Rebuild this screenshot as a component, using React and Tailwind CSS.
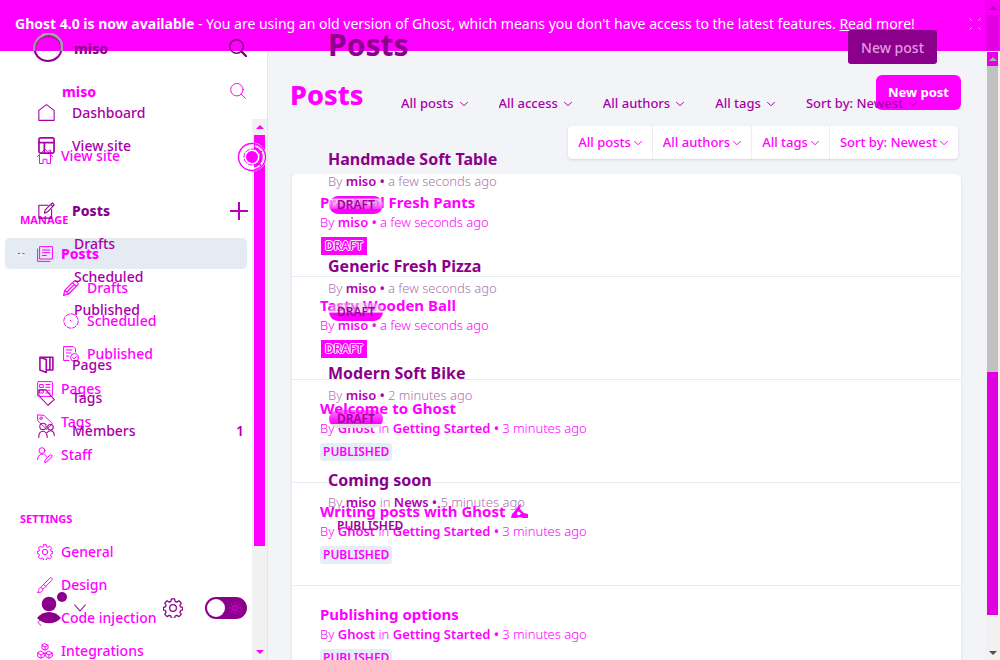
import React from "react";

const stroke = {
  fill: "none",
  stroke: "currentColor",
  strokeLinecap: "round",
  strokeLinejoin: "round",
};

function Icon({ name, className = "size-4" }) {
  return (
    <svg viewBox="0 0 16 16" className={`shrink-0 ${className}`} aria-hidden="true" {...stroke}>
      {icons[name]}
    </svg>
  );
}

const gearPath =
  "M6.7.7h2.6l.4 2 1.3.6 1.8-1.1 1.8 1.9-1.1 1.7.6 1.3 1.6.4v2l-1.6.5-.6 1.4 1.1 1.7-1.8 1.8-1.8-1-1.3.5-.4 1.9H6.7l-.4-1.9-1.3-.5-1.8 1-1.8-1.8 1.1-1.7-.6-1.4-1.6-.5v-2l1.6-.4.6-1.3-1.1-1.7 1.8-1.9L5 3.3l1.3-.6z";

const icons = {
  search: (
    <>
      <circle cx="6.9" cy="6.7" r="6.2" />
      <path d="M11.3 11.2l4.2 4.2" />
    </>
  ),
  searchBold: (
    <>
      <circle cx="6.7" cy="6.7" r="6" strokeWidth="1.2" />
      <path d="M11 11l4.3 4.3" strokeWidth="1.9" />
    </>
  ),
  houseA: <path d="M.5 8.5L8 1.2l7.5 7.3M2.5 7.5v8h3.6v-4.300h3.8v4.300h3.600v-8M12 4.500V2.200h1.500v3.500" />,
  house: <path d="M.8 6L8 .6 15.2 6v9.4H.8z" />,
  layout: (
    <g strokeWidth="1.6">
      <rect x=".9" y=".9" width="14.2" height="14.2" rx="1.5" />
      <path d="M.8 5.300h14.400M6 5.300v9.900" />
    </g>
  ),
  compose: <path d="M9.5 3H.8v12.200h12V7M6 10.5l.8-3L13.5.8l1.8 1.800L8.800 9.500zM12 2.300l1.800 1.800" />,
  stack: (
    <>
      <rect x="3" y=".6" width="12.4" height="12.4" />
      <path d="M.6 3v12.4H13M5.5 4h7.200M5.500 6.700h7.200M5.500 9.500h3.800" />
    </>
  ),
  pencil: <path d="M.6 15.4l1.2-5L11 1.2c1.6-1.5 5.200 2 3.700 3.700L5.600 14zM1.800 10.400L5.600 14M9.500 2.700l3.700 3.700M4 11.800l7.500-7.400" strokeWidth="1.2" />,
  clock: (
    <>
      <circle cx="8" cy="8" r="7.2" strokeDasharray="4 1.6" />
      <path d="M7.3 7.3l.9.9" />
    </>
  ),
  published: (
    <>
      <path d="M6 14.500H.6V.6h9.700l2.200 2.200V6M3.300 4h5.400M3.300 7h4.500M3.300 10h2.500" />
      <circle cx="11.5" cy="11.5" r="3.9" />
      <path d="M9.700 11.600l1.400 1.300 2.200-2.600" />
    </>
  ),
  pages: (
    <>
      <rect x=".6" y=".6" width="14.8" height="14.8" rx="1.2" />
      <path d="M3 3.500h3.300v3H3zM3 9h3.300v3H3zM8.800 3.500H13M8.800 6.300H13M8.800 9.300H13M8.800 12H13" />
    </>
  ),
  book: (
    <path d="M1.800 1.200h9.400v12H8M1.800 1.200l6 2v12.300l-6-2.300zM11.200 1.200H14v12h-2.800" strokeWidth="1.5" />
  ),
  tagA: (
    <>
      <path d="M.7.9L7 1.300l8.400 8.400-5.700 5.700L1.200 7.200z" />
      <circle cx="4" cy="4.2" r="1.2" />
    </>
  ),
  tag: <path d="M.8.8h6.500l8 9.200-6 5.300-8.500-9z" />,
  members: (
    <>
      <circle cx="4.7" cy="4.2" r="3" />
      <circle cx="11.7" cy="5" r="2.6" />
      <path d="M.7 14.500c0-7.800 8-7.800 8 0M8.500 10c2.300-3 6.800-2.400 6.800 3" />
    </>
  ),
  staff: (
    <>
      <circle cx="5" cy="3.6" r="2.9" />
      <path d="M.6 12.500c0-7 8-6.600 8.800-2.800M7.700 15.300l.5-2.400 4.900-5c1-1 2.800.8 1.800 1.800l-4.900 5z" />
    </>
  ),
  gear: (
    <>
      <path d={gearPath} />
      <circle cx="8" cy="8" r="2.7" />
    </>
  ),
  brush: <path d="M.7 15.400c1.400-1 .4-2.800 1.600-4 2-1.900 4.900.8 3 2.800-1.300 1.300-3 1.200-4.600 1.200zM4 10.200L12.600 1.400c1.600-1.600 3.600.4 2.100 2L6 12.300M6.800 7.500l2 2" />,
  code: <path d="M4 9.500L.8 12.500l3.200 3" />,
  modules: (
    <>
      <path d="M8 .7l3 1.600v3.300l-3 1.700-3-1.700V2.300zM4 8.300l3.300 1.800v3.300L4 15.300.7 13.400v-3.300zM12 8.300l3.300 1.800v3.300L12 15.300l-3.300-1.900v-3.300z" />
      <path d="M5 2.300L8 4l3-1.700M8 4v3M.7 10.100L4 12l3.300-1.900M4 12v3M8.700 10.100L12 12l3.300-1.900M12 12v3" />
    </>
  ),
  plus: <path d="M8 0v16M0 8h16" strokeWidth="1.8" strokeLinecap="butt" />,
  chevron: <path d="M1 4.500l7 7 7-7" strokeWidth="2" />,
  chevronThin: <path d="M1 4l7 8 7-8" strokeWidth="1.5" />,
  close: <path d="M1 1l14 14M15 1L1 15" strokeDasharray="3 14 3" />,
};

function Chevron({ className = "size-2" }) {
  return <Icon name="chevron" className={className} />;
}

function Filter({ label, first, boxed }) {
  return (
    <label
      className={
        boxed
          ? `flex items-center gap-[3px] px-2.5 ${first ? "" : "border-l border-[#eeeef2]"}`
          : "flex items-center gap-1.5"
      }
    >
      <select aria-label={label} className="field-sizing-content appearance-none bg-transparent font-medium">
        <option>{label}</option>
      </select>
      <Chevron />
    </label>
  );
}

function NavLink({ icon, label, sub, active }) {
  return (
    <a
      href="#"
      className={`flex items-center gap-2 rounded-[5px] ${sub ? "pl-[58px]" : "pl-2"} ${
        active ? "my-0.5 h-[31px] bg-[#e5ebf2] font-extrabold" : "h-[33px] font-medium"
      }`}
    >
      {!sub && (
        <span className="flex w-4 justify-center">
          {active && (
            <svg viewBox="0 0 8 6" className="h-1.5 w-2" fill="none" aria-hidden="true">
              <path d="M1 2.500h2M5.500 2.500h2" stroke="#ff00ff" />
              <path d="M2.500 3.500L4 5l1.500-1.500" stroke="#fff" />
            </svg>
          )}
        </span>
      )}
      <Icon name={icon} />
      {label}
    </a>
  );
}

function NavHeading({ children }) {
  return <h2 className="pt-10 pb-2 pl-[15px] text-[11px] leading-4 font-bold">{children}</h2>;
}

function Arrow({ down, className = "" }) {
  return (
    <svg viewBox="0 0 8 4" className={`h-1 w-2 ${className}`} fill="currentColor" aria-hidden="true">
      <path d={down ? "M0 0h8L4 4z" : "M0 4h8L4 0z"} />
    </svg>
  );
}

const entries = [
  { title: "Practical Fresh Pants", by: "miso", when: "a few seconds ago", state: "DRAFT" },
  { title: "Tasty Wooden Ball", by: "miso", when: "a few seconds ago", state: "DRAFT" },
  { title: "Welcome to Ghost", by: "Ghost", tag: "Getting Started", when: "3 minutes ago", state: "PUBLISHED" },
  { title: "Writing posts with Ghost", hand: true, by: "Ghost", tag: "Getting Started", when: "3 minutes ago", state: "PUBLISHED" },
  { title: "Publishing options", by: "Ghost", tag: "Getting Started", when: "3 minutes ago", state: "PUBLISHED" },
];

const recent = [
  { title: "Handmade Soft Table", by: "miso", when: "a few seconds ago", state: "DRAFT", fill: "bg-linear-to-b from-[#ff00ff] from-12% via-[#d8d0d8]/60 via-20% to-[#ff00ff] to-75%" },
  { title: "Generic Fresh Pizza", by: "miso", when: "a few seconds ago", state: "DRAFT", fill: "bg-linear-to-b from-[#dcd4dc]/50 from-50% to-[#ff00ff] to-55%" },
  { title: "Modern Soft Bike", by: "miso", when: "2 minutes ago", state: "DRAFT", fill: "bg-linear-to-b from-[#ff00ff]/60 from-10% via-[#ff00ff] via-75% to-[#e4e0e4] to-80%" },
  { title: "Coming soon", by: "miso", tag: "News", when: "5 minutes ago", state: "PUBLISHED", fill: "" },
];

function Meta({ post, strong }) {
  return (
    <p className="text-[13px] leading-5 font-light whitespace-nowrap">
      By <b className={strong}>{post.by}</b>
      {post.tag && (
        <>
          {" "}in <b className={strong}>{post.tag}</b>
        </>
      )}{" "}
      <b className={strong}>•</b> {post.when}
    </p>
  );
}

function BaseSidebar() {
  return (
    <aside className="flex w-[268px] shrink-0 flex-col border-r border-[#e3e6ec] bg-white text-[14px]">
      <div className="flex h-[68px] shrink-0 items-center justify-between pt-3 pr-[21px] pl-[62px]">
        <strong className="font-extrabold">miso</strong>
        <button aria-label="Search">
          <Icon name="search" />
        </button>
      </div>
      <div className="flex min-h-0 flex-1">
        <nav className="min-w-0 flex-1 overflow-hidden px-[5px] pt-5">
          <NavLink icon="houseA" label="View site" />
          <NavHeading>MANAGE</NavHeading>
          <NavLink icon="stack" label="Posts" active />
          <NavLink icon="pencil" label="Drafts" sub />
          <NavLink icon="clock" label="Scheduled" sub />
          <NavLink icon="published" label="Published" sub />
          <div className="pt-0.5">
            <NavLink icon="pages" label="Pages" />
            <NavLink icon="tagA" label="Tags" />
            <NavLink icon="staff" label="Staff" />
          </div>
          <NavHeading>SETTINGS</NavHeading>
          <NavLink icon="gear" label="General" />
          <NavLink icon="brush" label="Design" />
          <NavLink icon="code" label="Code injection" />
          <NavLink icon="modules" label="Integrations" />
        </nav>
        <div className="relative flex w-[15px] shrink-0 flex-col items-center bg-[#f1f1f1]">
          <Arrow className="my-[6px] shrink-0" />
          <div className="w-[11px] flex-[413] bg-[#ff00ff]" />
          <div className="flex-[98]" />
          <Arrow down className="my-[6px] shrink-0" />
          <svg viewBox="0 0 30 30" className="absolute top-[23px] -left-[15px] size-[30px] max-w-none" fill="none" aria-hidden="true">
            <circle cx="15" cy="15" r="14.500" fill="#fff" />
            <path d="M17 2a13.500 13.500 0 0 1 0 26z" fill="#ff00ff" />
            <circle cx="15" cy="15" r="13.500" stroke="#ff00ff" strokeWidth="1.400" />
            <circle cx="15" cy="15" r="11.500" stroke="#fff" strokeWidth="1.500" strokeDasharray="8 1.500" />
            <circle cx="15" cy="15" r="8" fill="#fff" stroke="#ff00ff" strokeDasharray="5 1" />
            <circle cx="15" cy="15" r="6" fill="#ff00ff" />
          </svg>
        </div>
      </div>
    </aside>
  );
}

function BaseLayer() {
  return (
    <div className="flex min-h-0 min-w-0 text-[#ff00ff] [grid-area:1/1]">
      <div className="flex min-w-0 flex-1 flex-col">
        <div className="flex h-[51px] shrink-0 items-center justify-between bg-[#ff00ff] pr-1 pb-1 pl-[15px] text-[14px] text-white">
          <p className="whitespace-nowrap">
            <b>Ghost 4.0 is now available</b> - You are using an old version of Ghost, which means you don't have access to the latest features.{" "}
            <a href="#" className="underline">Read more!</a>
          </p>
          <button aria-label="Close">
            <Icon name="close" className="size-3" />
          </button>
        </div>
        <div className="flex min-h-0 flex-1">
          <BaseSidebar />
          <main className="min-w-0 flex-1 overflow-hidden bg-[#f2f4f8] pt-6 pr-6 pl-[22px]">
            <header className="flex h-[35px] items-center justify-between">
              <h1 className="pt-1 text-[27px] leading-8 font-extrabold">Posts</h1>
              <button className="h-[35px] rounded-[6px] bg-[#ff00ff] px-3 text-[13px] font-bold text-white">New post</button>
            </header>
            <div className="mt-4 mr-[3px] flex justify-end">
              <div className="flex h-[33px] rounded bg-white text-[13px] shadow-sm">
                <Filter label="All posts" boxed first />
                <Filter label="All authors" boxed />
                <Filter label="All tags" boxed />
                <Filter label="Sort by: Newest" boxed />
              </div>
            </div>
            <ul className="mt-[15px] ml-0.5 rounded-[5px] bg-white shadow-sm">
              {entries.map((post) => (
                <li key={post.title} className="h-[103px] border-b border-[#e5ecf3] pt-[18px] pl-7">
                  <h3 className="flex items-center gap-1 text-[15px] leading-5 font-bold">
                    <a href="#">{post.title}</a>
                    {post.hand && (
                      <svg viewBox="0 0 18 16" className="h-4 w-[18px]" fill="currentColor" aria-hidden="true">
                        <path d="M1 15l1-4 2-2 5-7 2-1-1 5 4 4 4 1v4h-5l-3-1-4 1z" />
                        <path d="M7 9.500l2-1 2 2-2 2-2-1z" fill="#fff" />
                      </svg>
                    )}
                  </h3>
                  <Meta post={post} strong="font-semibold" />
                  {post.state === "DRAFT" ? (
                    <span className="mt-[5px] ml-px inline-block h-[18px] bg-[#ff00ff] px-1 text-[12px] leading-[18px] font-semibold [text-shadow:1px_0_white,-1px_0_white,0_1px_white,0_-1px_white]">
                      DRAFT
                    </span>
                  ) : (
                    <span className="mt-[5px] inline-block h-[18px] rounded-[3px] bg-[#e5eef5] px-[3px] text-[12px] leading-[18px] font-semibold">
                      PUBLISHED
                    </span>
                  )}
                </li>
              ))}
            </ul>
          </main>
        </div>
      </div>
      <div className="flex w-[15px] shrink-0 flex-col bg-[#f1f1f1]">
        <div className="flex h-[51px] shrink-0 flex-col items-center bg-[#f500f5] text-[#b800b8]">
          <Arrow className="mt-[6px] mb-[5px] shrink-0" />
          <div className="w-[11px] flex-1 bg-[#e000e0]" />
        </div>
        <div className="mx-auto mt-px flex h-[14px] w-[11px] shrink-0 items-center justify-center bg-[#e600e6] text-[#b0b0b0]">
          <Arrow />
        </div>
        <div className="mx-auto w-[11px] flex-[305] bg-[#c1c1c1]" />
        <div className="mx-auto w-[11px] flex-[243] bg-[#e000e0]" />
        <div className="flex-[31]" />
        <Arrow down className="mx-auto my-[5px] shrink-0 text-[#505050]" />
      </div>
    </div>
  );
}

function MenuLink({ icon, label, bold, count, add }) {
  return (
    <div className={`flex h-[33px] items-center ${bold ? "font-extrabold text-[#8b008b]" : "font-medium"}`}>
      <a href="#" className="flex flex-1 items-center gap-[17px]">
        {icon ? <Icon name={icon} className="size-[17px]" /> : <span className="w-[19px]" />}
        {label}
      </a>
      {count && <span className="pr-1 font-semibold">{count}</span>}
      {add && (
        <button aria-label="Add post" className="text-[#b800b8]">
          <Icon name="plus" className="size-[18px]" />
        </button>
      )}
    </div>
  );
}

function TopLayer() {
  return (
    <div className="flex min-h-0 min-w-0 pr-[15px] text-[#a800a8] [grid-area:1/1]">
      <aside className="flex w-[268px] shrink-0 flex-col pt-[33px] pb-[41px] text-[14px]">
        <header className="flex h-[30px] shrink-0 items-center gap-[11px] pr-[21px] pl-[33px]">
          <svg viewBox="0 0 30 30" className="size-[30px]" fill="none" aria-hidden="true">
            <ellipse cx="15" cy="15" rx="13.500" ry="13" stroke="#a800a8" strokeWidth="2.200" />
            <path d="M1.500 18A13.500 13.500 0 0 1 10 2.500" stroke="#a9a0a9" strokeWidth="2" />
            <path d="M9 2.500A13.500 13.500 0 0 1 28.500 18" stroke="#a9a0a9" strokeWidth="2.600" />
            <path d="M3 12C6 3 18 1 27 9" stroke="#654065" />
            <path d="M2 18c2 9 14 13 22 6" stroke="#75007c" />
          </svg>
          <strong className="flex-1 font-extrabold text-[#8b008b]">miso</strong>
          <button aria-label="Search posts" className="text-[#75006e]">
            <Icon name="searchBold" className="size-[18px]" />
          </button>
        </header>
        <nav className="flex flex-1 flex-col pt-[33px] pr-5 pl-[38px]">
          <MenuLink icon="house" label="Dashboard" />
          <MenuLink icon="layout" label="View site" />
          <div className="mt-8">
            <MenuLink icon="compose" label="Posts" bold add />
            <MenuLink label="Drafts" />
            <MenuLink label="Scheduled" />
            <MenuLink label="Published" />
          </div>
          <div className="mt-[22px]">
            <MenuLink icon="book" label="Pages" />
            <MenuLink icon="tag" label="Tags" />
            <MenuLink icon="members" label="Members" count="1" />
          </div>
        </nav>
        <footer className="flex h-[22px] items-center pr-[21px] pl-[37px] text-[#8b008b]">
          <button aria-label="Account" className="flex items-center gap-1.5">
            <svg viewBox="0 0 31 34" className="h-[34px] w-[31px]" fill="currentColor" aria-hidden="true">
              <circle cx="12" cy="13" r="7.300" />
              <circle cx="25" cy="6" r="5" />
              <path d="M0 27c6-8 18-8 24 0-6 7-18 7-24 0z" />
            </svg>
            <Icon name="chevronThin" className="size-3" />
          </button>
          <button aria-label="Settings" className="ml-auto">
            <Icon name="gear" className="size-5" />
          </button>
          <label className="relative ml-[22px] flex">
            <input
              type="checkbox"
              aria-label="Night mode"
              className="h-[22px] w-[42px] appearance-none rounded-full bg-[#8b008b]"
            />
            <svg viewBox="0 0 42 22" className="pointer-events-none absolute inset-0" fill="none" aria-hidden="true">
              <circle cx="11" cy="11" r="9" fill="#fff" />
              <g stroke="#e000e0">
                <circle cx="30" cy="11" r="2.5" />
                <path d="M30 5v2.500M30 14.500V17M24 11h2.500M33.500 11H36M26 7l1.500 1.500M32.500 13.500L34 15M34 7l-1.500 1.500M27.500 13.500L26 15" />
              </g>
            </svg>
          </label>
        </footer>
      </aside>
      <section className="min-w-0 flex-1 pt-[30px] pr-12 pl-[60px]">
        <header className="flex h-[34px] items-center justify-between">
          <h1 className="pb-1 text-[30px] leading-8 font-bold text-[#8b008b]">Posts</h1>
          <button className="h-[34px] rounded-[3px] bg-[#8b008b] px-[13px] text-[14px] font-medium text-[#e09be0]">New post</button>
        </header>
        <div className="mt-[29px] mr-5 flex h-5 justify-end gap-[31px] pt-px text-[13px]">
          <Filter label="All posts" />
          <Filter label="All access" />
          <Filter label="All authors" />
          <Filter label="All tags" />
          <Filter label="Sort by: Newest" />
        </div>
        <ul className="mt-[34px]">
          {recent.map((post) => (
            <li key={post.title} className="h-[107px] text-[#a978ad]">
              <h3 className="text-[16px] leading-6 font-bold text-[#8b008b]">
                <a href="#">{post.title}</a>
              </h3>
              <Meta post={post} strong="font-semibold text-[#b000b0]" />
              <span className={`mt-[5px] ml-px inline-block h-[18px] rounded-full px-2 text-[12px] leading-[18px] font-semibold text-[#a000a0] ${post.fill}`}>
                {post.state}
              </span>
            </li>
          ))}
        </ul>
      </section>
    </div>
  );
}

export default function App() {
  return (
    <div className="grid h-screen grid-cols-1 grid-rows-1 overflow-hidden bg-white font-['Noto_Sans','Open_Sans',sans-serif]">
      <BaseLayer />
      <TopLayer />
    </div>
  );
}
